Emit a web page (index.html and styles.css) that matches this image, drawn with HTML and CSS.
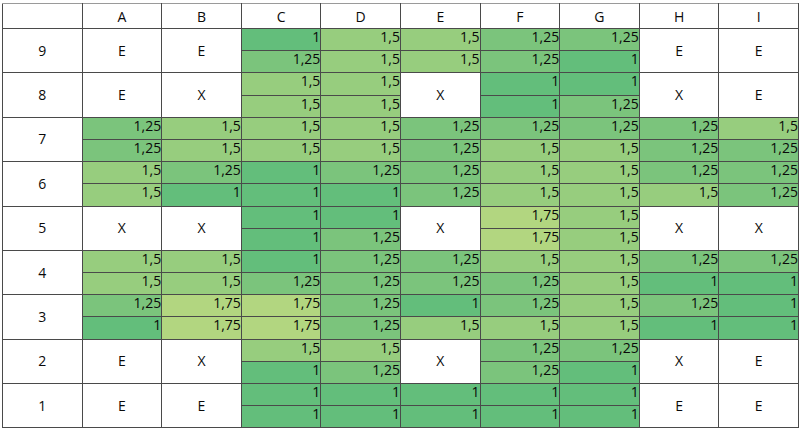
FILE: index.html
```html
<!DOCTYPE html>
<html>
<head>
<meta charset="utf-8">
<link rel="stylesheet" href="styles.css">
</head>
<body>
<table class="sheet">
<colgroup><col><col><col><col><col><col><col><col><col><col></colgroup>
<tr class="head"><th></th><th>A</th><th>B</th><th>C</th><th>D</th><th>E</th><th>F</th><th>G</th><th>H</th><th>I</th></tr>

<tr class="r1"><td class="lbl" rowspan="2">9</td><td class="lbl" rowspan="2">E</td><td class="lbl" rowspan="2">E</td><td class="n v100">1</td><td class="n v150">1,5</td><td class="n v150">1,5</td><td class="n v125">1,25</td><td class="n v125">1,25</td><td class="lbl" rowspan="2">E</td><td class="lbl" rowspan="2">E</td></tr>
<tr class="r2"><td class="n v125">1,25</td><td class="n v150">1,5</td><td class="n v150">1,5</td><td class="n v125">1,25</td><td class="n v100">1</td></tr>

<tr class="r1"><td class="lbl" rowspan="2">8</td><td class="lbl" rowspan="2">E</td><td class="lbl" rowspan="2">X</td><td class="n v150">1,5</td><td class="n v150">1,5</td><td class="lbl" rowspan="2">X</td><td class="n v100">1</td><td class="n v100">1</td><td class="lbl" rowspan="2">X</td><td class="lbl" rowspan="2">E</td></tr>
<tr class="r2"><td class="n v150">1,5</td><td class="n v150">1,5</td><td class="n v100">1</td><td class="n v125">1,25</td></tr>

<tr class="r1"><td class="lbl" rowspan="2">7</td><td class="n v125">1,25</td><td class="n v150">1,5</td><td class="n v150">1,5</td><td class="n v150">1,5</td><td class="n v125">1,25</td><td class="n v125">1,25</td><td class="n v125">1,25</td><td class="n v125">1,25</td><td class="n v150">1,5</td></tr>
<tr class="r2"><td class="n v125">1,25</td><td class="n v150">1,5</td><td class="n v150">1,5</td><td class="n v150">1,5</td><td class="n v125">1,25</td><td class="n v150">1,5</td><td class="n v150">1,5</td><td class="n v125">1,25</td><td class="n v125">1,25</td></tr>

<tr class="r1"><td class="lbl" rowspan="2">6</td><td class="n v150">1,5</td><td class="n v125">1,25</td><td class="n v100">1</td><td class="n v125">1,25</td><td class="n v125">1,25</td><td class="n v150">1,5</td><td class="n v150">1,5</td><td class="n v125">1,25</td><td class="n v125">1,25</td></tr>
<tr class="r2"><td class="n v150">1,5</td><td class="n v100">1</td><td class="n v100">1</td><td class="n v100">1</td><td class="n v125">1,25</td><td class="n v150">1,5</td><td class="n v150">1,5</td><td class="n v150">1,5</td><td class="n v125">1,25</td></tr>

<tr class="r1"><td class="lbl" rowspan="2">5</td><td class="lbl" rowspan="2">X</td><td class="lbl" rowspan="2">X</td><td class="n v100">1</td><td class="n v100">1</td><td class="lbl" rowspan="2">X</td><td class="n v175">1,75</td><td class="n v150">1,5</td><td class="lbl" rowspan="2">X</td><td class="lbl" rowspan="2">X</td></tr>
<tr class="r2"><td class="n v100">1</td><td class="n v125">1,25</td><td class="n v175">1,75</td><td class="n v150">1,5</td></tr>

<tr class="r1"><td class="lbl" rowspan="2">4</td><td class="n v150">1,5</td><td class="n v150">1,5</td><td class="n v100">1</td><td class="n v125">1,25</td><td class="n v125">1,25</td><td class="n v150">1,5</td><td class="n v150">1,5</td><td class="n v125">1,25</td><td class="n v125">1,25</td></tr>
<tr class="r2"><td class="n v150">1,5</td><td class="n v150">1,5</td><td class="n v125">1,25</td><td class="n v125">1,25</td><td class="n v125">1,25</td><td class="n v125">1,25</td><td class="n v150">1,5</td><td class="n v100">1</td><td class="n v100">1</td></tr>

<tr class="r1"><td class="lbl" rowspan="2">3</td><td class="n v125">1,25</td><td class="n v175">1,75</td><td class="n v175">1,75</td><td class="n v125">1,25</td><td class="n v100">1</td><td class="n v125">1,25</td><td class="n v150">1,5</td><td class="n v125">1,25</td><td class="n v100">1</td></tr>
<tr class="r2"><td class="n v100">1</td><td class="n v175">1,75</td><td class="n v175">1,75</td><td class="n v125">1,25</td><td class="n v150">1,5</td><td class="n v150">1,5</td><td class="n v150">1,5</td><td class="n v100">1</td><td class="n v100">1</td></tr>

<tr class="r1"><td class="lbl" rowspan="2">2</td><td class="lbl" rowspan="2">E</td><td class="lbl" rowspan="2">X</td><td class="n v150">1,5</td><td class="n v150">1,5</td><td class="lbl" rowspan="2">X</td><td class="n v125">1,25</td><td class="n v125">1,25</td><td class="lbl" rowspan="2">X</td><td class="lbl" rowspan="2">E</td></tr>
<tr class="r2"><td class="n v100">1</td><td class="n v125">1,25</td><td class="n v125">1,25</td><td class="n v100">1</td></tr>

<tr class="r1"><td class="lbl" rowspan="2">1</td><td class="lbl" rowspan="2">E</td><td class="lbl" rowspan="2">E</td><td class="n v100">1</td><td class="n v100">1</td><td class="n v100">1</td><td class="n v100">1</td><td class="n v100">1</td><td class="lbl" rowspan="2">E</td><td class="lbl" rowspan="2">E</td></tr>
<tr class="r2"><td class="n v100">1</td><td class="n v100">1</td><td class="n v100">1</td><td class="n v100">1</td><td class="n v100">1</td></tr>
</table>
</body>
</html>
```

FILE: styles.css
```css
html, body {
  margin: 0;
  padding: 0;
  background: #ffffff;
}

body {
  padding: 3px 0 0 2px;
  font-family: "Open Sans", "Liberation Sans", sans-serif;
  font-size: 14px;
  color: #0a0a0a;
}

.sheet {
  border-collapse: collapse;
  table-layout: fixed;
  width: 797px;
  border: 1px solid #9a9a9a;
}

.sheet col {
  width: 79.6px;
}

.sheet th,
.sheet td {
  border: 1px solid #4a4a4a;
  padding: 0;
  white-space: nowrap;
}

.head th {
  height: 22px;
  font-weight: normal;
  text-align: center;
  vertical-align: middle;
  line-height: 18px;
  padding-top: 2px;
  border-top-color: #9a9a9a;
}

.r1, .r2 {
  height: 22.2px;
}

.lbl {
  text-align: center;
  vertical-align: middle;
  background: #ffffff;
  line-height: 18px;
  padding-top: 1px;
}

.n {
  text-align: right;
  vertical-align: top;
  line-height: 16px;
  padding: 0 3px 0 0;
}

.v100 { background: #63be7b; }
.v125 { background: #7bc47c; }
.v150 { background: #97cd7e; }
.v175 { background: #b2d680; }
```
